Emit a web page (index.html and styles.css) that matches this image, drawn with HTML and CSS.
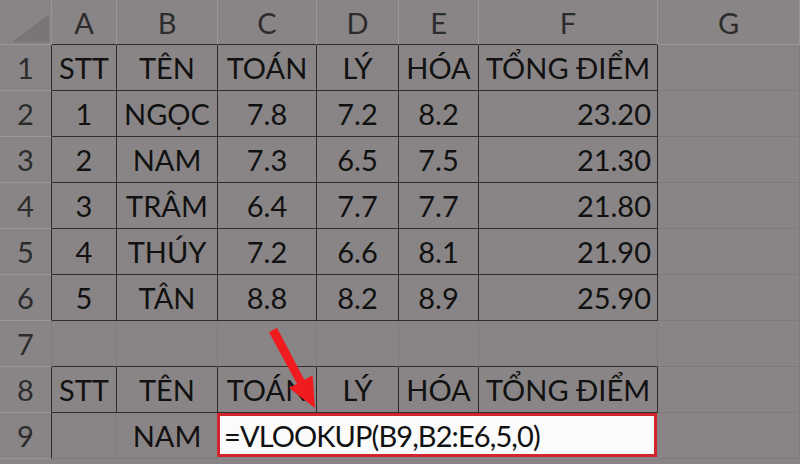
FILE: index.html
```html
<!DOCTYPE html>
<html lang="vi">
<head>
<meta charset="utf-8">
<title>VLOOKUP</title>
<link rel="stylesheet" href="styles.css">
</head>
<body>
<div class="page">
  <div class="sheet">
    <div class="c hd corner"><svg class="tri" width="52" height="45" viewBox="0 0 52 45"><polygon points="12,43 50,14 50,43" fill="#7a7677"/></svg></div>
    <div class="c hd db">A</div>
    <div class="c hd db">B</div>
    <div class="c hd db">C</div>
    <div class="c hd db">D</div>
    <div class="c hd db">E</div>
    <div class="c hd db">F</div>
    <div class="c hd">G</div>

    <div class="c rh dr">1</div>
    <div class="c d">STT</div><div class="c d">TÊN</div><div class="c d">TOÁN</div><div class="c d">LÝ</div><div class="c d">HÓA</div><div class="c d">TỔNG ĐIỂM</div>
    <div class="c"></div>

    <div class="c rh dr">2</div>
    <div class="c d">1</div><div class="c d">NGỌC</div><div class="c d">7.8</div><div class="c d">7.2</div><div class="c d">8.2</div><div class="c d r">23.20</div>
    <div class="c"></div>

    <div class="c rh dr">3</div>
    <div class="c d">2</div><div class="c d">NAM</div><div class="c d">7.3</div><div class="c d">6.5</div><div class="c d">7.5</div><div class="c d r">21.30</div>
    <div class="c"></div>

    <div class="c rh dr">4</div>
    <div class="c d">3</div><div class="c d">TRÂM</div><div class="c d">6.4</div><div class="c d">7.7</div><div class="c d">7.7</div><div class="c d r">21.80</div>
    <div class="c"></div>

    <div class="c rh dr">5</div>
    <div class="c d">4</div><div class="c d">THÚY</div><div class="c d">7.2</div><div class="c d">6.6</div><div class="c d">8.1</div><div class="c d r">21.90</div>
    <div class="c"></div>

    <div class="c rh dr">6</div>
    <div class="c d">5</div><div class="c d">TÂN</div><div class="c d">8.8</div><div class="c d">8.2</div><div class="c d">8.9</div><div class="c d r">25.90</div>
    <div class="c"></div>

    <div class="c rh">7</div>
    <div class="c db"></div><div class="c db"></div><div class="c db"></div><div class="c db"></div><div class="c db"></div><div class="c db"></div>
    <div class="c"></div>

    <div class="c rh dr">8</div>
    <div class="c d">STT</div><div class="c d">TÊN</div><div class="c d">TOÁN</div><div class="c d">LÝ</div><div class="c d">HÓA</div><div class="c d">TỔNG ĐIỂM</div>
    <div class="c"></div>

    <div class="c rh dr">9</div>
    <div class="c"></div>
    <div class="c">NAM</div>
    <div class="formula">=VLOOKUP(B9,B2:E6,5,0)</div>
    <div class="c"></div>
  </div>
  <svg class="arrow" width="800" height="464" viewBox="0 0 800 464">
    <polygon points="277,327.8 304.3,379.7 312.6,375.2 315,408 289,388 297,383.8 269,332.2" fill="#f01b1f"/>
  </svg>
</div>
</body>
</html>
```

FILE: styles.css
```css
* { box-sizing: border-box; }
html, body {
  margin: 0;
  padding: 0;
  width: 800px;
  height: 464px;
  overflow: hidden;
  background: #898586;
}
.page {
  position: relative;
  width: 800px;
  height: 464px;
  font-family: "Lato", "Noto Sans", sans-serif;
  color: #111;
  font-size: 29px;
}
.sheet {
  display: grid;
  grid-template-columns: 52px 65px 101px 99px 82px 80px 179px 142px;
  grid-template-rows: 45px repeat(9, 46px) 5px;
}
.c {
  display: flex;
  align-items: center;
  justify-content: center;
  border-right: 1px solid #7f7b7c;
  border-bottom: 1px solid #7f7b7c;
  white-space: nowrap;
}
.hd {
  color: #2c2c2c;
  border-right-color: #9b9798;
  border-bottom-color: #9b9798;
}
.rh {
  color: #2c2c2c;
  border-bottom-color: #9b9798;
}
.corner { padding: 0; }
.tri { display: block; }
.d {
  border-right-color: #2e2c2d;
  border-bottom-color: #2e2c2d;
}
.db { border-bottom-color: #2e2c2d; }
.dr { border-right-color: #2e2c2d; }
.r {
  justify-content: flex-end;
  padding-right: 6px;
}
.formula {
  grid-column: span 4;
  margin: 0 1px 2px -1px;
  background: #fbfbfb;
  border: 3px solid #d0252c;
  display: flex;
  align-items: center;
  padding-left: 4px;
  color: #111;
  white-space: nowrap;
  letter-spacing: -0.9px;
}
.arrow {
  position: absolute;
  left: 0;
  top: 0;
  pointer-events: none;
}
```
